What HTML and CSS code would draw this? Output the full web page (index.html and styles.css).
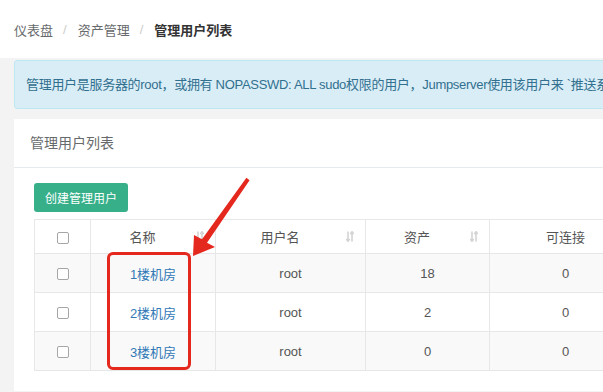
FILE: index.html
```html
<!DOCTYPE html>
<html lang="zh-CN">
<head>
    <meta charset="UTF-8">
    <meta name="viewport" content="width=device-width, initial-scale=1.0">
    <title>管理用户列表</title>
    <link rel="stylesheet" href="styles.css">
</head>
<body>
    <!-- Breadcrumb -->
    <div class="crumbs">
        <span class="crumb">仪表盘</span><span class="sep">/</span><span class="crumb">资产管理</span><span class="sep">/</span><span class="crumb current">管理用户列表</span>
    </div>

    <div class="content">
        <div class="alert">管理用户是服务器的root，或拥有 NOPASSWD: ALL sudo权限的用户，Jumpserver使用该用户来 `推送系统用户`、`获取资产硬件信息` 等。</div>

        <div class="panel">
            <div class="panel-title">管理用户列表</div>
            <div class="panel-body">
                <button class="btn-create">创建管理用户</button>
                <table class="list">
                    <colgroup>
                        <col style="width: 56px">
                        <col style="width: 125px">
                        <col style="width: 150px">
                        <col style="width: 124px">
                        <col style="width: 152px">
                        <col style="width: 150px">
                    </colgroup>
                    <thead>
                        <tr>
                            <th><span class="cb"></span></th>
                            <th><div class="th-inner"><span class="th-label">名称</span><svg class="sort" viewBox="0 0 8 11"><path d="M2 0.5V10M0.3 8L2 10.3L3.7 8M6 10.5V1M4.3 3L6 0.7L7.7 3" /></svg></div></th>
                            <th><div class="th-inner"><span class="th-label">用户名</span><svg class="sort" viewBox="0 0 8 11"><path d="M2 0.5V10M0.3 8L2 10.3L3.7 8M6 10.5V1M4.3 3L6 0.7L7.7 3" /></svg></div></th>
                            <th><div class="th-inner"><span class="th-label">资产</span><svg class="sort" viewBox="0 0 8 11"><path d="M2 0.5V10M0.3 8L2 10.3L3.7 8M6 10.5V1M4.3 3L6 0.7L7.7 3" /></svg></div></th>
                            <th>可连接</th>
                            <th>不可连接</th>
                        </tr>
                    </thead>
                    <tbody>
                        <tr>
                            <td><span class="cb"></span></td>
                            <td><a href="#">1楼机房</a></td>
                            <td>root</td>
                            <td>18</td>
                            <td>0</td>
                            <td>0</td>
                        </tr>
                        <tr>
                            <td><span class="cb"></span></td>
                            <td><a href="#">2楼机房</a></td>
                            <td>root</td>
                            <td>2</td>
                            <td>0</td>
                            <td>0</td>
                        </tr>
                        <tr>
                            <td><span class="cb"></span></td>
                            <td><a href="#">3楼机房</a></td>
                            <td>root</td>
                            <td>0</td>
                            <td>0</td>
                            <td>0</td>
                        </tr>
                    </tbody>
                </table>
            </div>
        </div>
    </div>

    <!-- annotation drawn over the screenshot -->
    <div class="mark-box"></div>
    <svg class="mark-arrow" viewBox="0 0 603 392">
        <polygon points="246.4,177.8 249.6,180.2 207,242.7 215,247 193,256 194,235 202,239.3" />
    </svg>
</body>
</html>
```

FILE: styles.css
```css
/* General */
html, body {
    margin: 0;
    padding: 0;
    overflow: hidden;
}

body {
    position: relative;
    width: 603px;
    height: 392px;
    background: #f3f3f4;
    font-family: 'Liberation Sans', 'Noto Sans CJK SC', sans-serif;
    font-size: 13px;
    color: #676a6c;
}

/* Breadcrumb */
.crumbs {
    height: 58px;
    background: #fff;
    display: flex;
    align-items: center;
    padding-left: 14px;
    white-space: nowrap;
}

.sep {
    color: #ccc;
    padding: 0 11px 0 10px;
}

.crumb.current {
    color: #333;
    font-weight: bold;
}

.content {
    padding: 2px 0 0 14px;
    width: 900px;
}

/* Info alert */
.alert {
    background: #d9edf7;
    border: 1px solid #bce8f1;
    border-radius: 3px;
    color: #31708f;
    padding: 14px 11px;
    line-height: 19px;
    letter-spacing: -0.3px;
    white-space: nowrap;
    overflow: hidden;
}

/* Panel */
.panel {
    margin-top: 10px;
    background: #fff;
}

.panel-title {
    padding: 15px 16px;
    font-size: 14px;
    line-height: 18px;
    color: #676a6c;
    border-bottom: 1px solid #e7eaec;
}

.panel-body {
    padding: 15px 20px 20px;
}

.btn-create {
    display: block;
    height: 29px;
    padding: 0 11px;
    border: none;
    border-radius: 3px;
    background: #37b08a;
    color: #fff;
    font-family: inherit;
    font-size: 12px;
}

/* Table */
.list {
    margin-top: 7px;
    border-collapse: collapse;
    table-layout: fixed;
    width: 757px;
}

.list th, .list td {
    border: 1px solid #e7e7e7;
    text-align: center;
    padding: 0;
    color: #555;
    font-weight: normal;
}

.list th {
    height: 33px;
}

.list td {
    height: 38px;
}

.list tbody tr:nth-child(odd) {
    background: #f9f9f9;
}

.list a {
    color: #337ab7;
    text-decoration: none;
}

.th-inner {
    display: flex;
    align-items: center;
}

.th-label {
    flex: 1;
    padding-right: 2px;
}

.sort {
    width: 8px;
    height: 11px;
    margin-right: 11px;
    fill: none;
    stroke: #d4d4d4;
    stroke-width: 1.6;
}

.cb {
    display: inline-block;
    width: 12px;
    height: 12px;
    box-sizing: border-box;
    border: 1px solid #a6a6a6;
    border-radius: 2px;
    background: #fff;
    vertical-align: middle;
}

/* Red annotation */
.mark-box {
    position: absolute;
    left: 107px;
    top: 252px;
    width: 84px;
    height: 118px;
    box-sizing: border-box;
    border: 3px solid #e5281e;
    border-radius: 6px;
}

.mark-arrow {
    position: absolute;
    left: 0;
    top: 0;
    width: 603px;
    height: 392px;
    pointer-events: none;
    fill: #e5281e;
}
```
